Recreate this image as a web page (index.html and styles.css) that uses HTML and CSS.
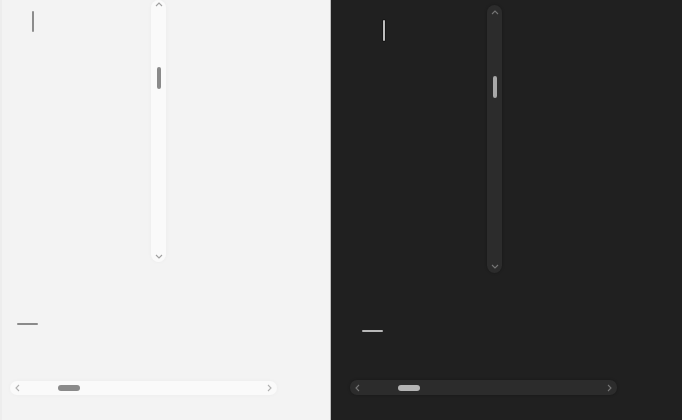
FILE: index.html
```html
<!DOCTYPE html>
<html>
<head>
<meta charset="utf-8">
<link rel="stylesheet" href="styles.css">
</head>
<body>
<div class="panel light">
  <div class="toprow">
    <div class="ind"></div>
    <div class="vbar">
      <svg class="chev" width="8" height="5" viewBox="0 0 8 5"><path d="M1 4 L4 1 L7 4" fill="none" stroke-width="1.1"/></svg>
      <div class="vspace1"></div>
      <div class="vthumb"></div>
      <div class="vspace2"></div>
      <svg class="chev" width="8" height="5" viewBox="0 0 8 5"><path d="M1 1 L4 4 L7 1" fill="none" stroke-width="1.1"/></svg>
    </div>
  </div>
  <div class="hline"></div>
  <div class="hbar">
    <svg class="chevh" width="5" height="8" viewBox="0 0 5 8"><path d="M4 1 L1 4 L4 7" fill="none" stroke-width="1.1"/></svg>
    <div class="hthumb"></div>
    <div class="hspace"></div>
    <svg class="chevh" width="5" height="8" viewBox="0 0 5 8"><path d="M1 1 L4 4 L1 7" fill="none" stroke-width="1.1"/></svg>
  </div>
</div>
<div class="divider"></div>
<div class="panel dark">
  <div class="toprow">
    <div class="ind"></div>
    <div class="vbar">
      <svg class="chev" width="8" height="5" viewBox="0 0 8 5"><path d="M1 4 L4 1 L7 4" fill="none" stroke-width="1.1"/></svg>
      <div class="vspace1"></div>
      <div class="vthumb"></div>
      <div class="vspace2"></div>
      <svg class="chev" width="8" height="5" viewBox="0 0 8 5"><path d="M1 1 L4 4 L7 1" fill="none" stroke-width="1.1"/></svg>
    </div>
  </div>
  <div class="hline"></div>
  <div class="hbar">
    <svg class="chevh" width="5" height="8" viewBox="0 0 5 8"><path d="M4 1 L1 4 L4 7" fill="none" stroke-width="1.1"/></svg>
    <div class="hthumb"></div>
    <div class="hspace"></div>
    <svg class="chevh" width="5" height="8" viewBox="0 0 5 8"><path d="M1 1 L4 4 L1 7" fill="none" stroke-width="1.1"/></svg>
  </div>
</div>
</body>
</html>
```
FILE: styles.css
```css
html, body {
  margin: 0;
  padding: 0;
  width: 682px;
  height: 420px;
  overflow: hidden;
  font-family: "Liberation Sans", Arial, sans-serif;
}
body {
  display: flex;
}
.panel {
  height: 420px;
  display: flex;
  flex-direction: column;
  align-items: flex-start;
}
.light {
  width: 330px;
  background: #f3f3f3;
  box-shadow: inset 2px 0 0 #ededed;
}
.divider {
  width: 1px;
  height: 420px;
  background: #bdbdbd;
}
.dark {
  width: 351px;
  background: #202020;
}
.toprow {
  display: flex;
  align-items: flex-start;
}
.ind {
  width: 2px;
  height: 21px;
  border-radius: 1px;
}
.vbar {
  width: 15px;
  display: flex;
  flex-direction: column;
  align-items: center;
  border-radius: 8px;
  box-sizing: border-box;
}
.vthumb {
  width: 4px;
  height: 22px;
  border-radius: 2px;
  margin-left: 1px;
}
.chev path, .chevh path { stroke: currentColor; }
.hline {
  width: 21px;
  height: 2px;
  border-radius: 1px;
}
.hbar {
  width: 267px;
  height: 14px;
  display: flex;
  align-items: center;
  border-radius: 7px;
  box-sizing: border-box;
  padding: 0 5px;
}
.hthumb {
  width: 22px;
  height: 6px;
  border-radius: 3px;
}
.hspace { flex: 1; }

/* light */
.light .ind { margin: 11px 0 0 32px; background: #8c8c8c; }
.light .vbar {
  margin-left: 117px;
  height: 262px;
  padding-top: 2px;
  background: #fafafa;
  box-shadow: 0 0 4px rgba(0,0,0,0.035);
  color: #a0a0a0;
}
.light .vspace1 { height: 60px; }
.light .vthumb { background: #8a8a8a; }
.light .vspace2 { flex: 1; }
.light .vbar .chev:last-child { margin-bottom: 3px; }
.light .hline { margin: 61px 0 0 17px; background: #8a8a8a; height: 1.5px; }
.light .hbar {
  margin: 56px 0 0 10px;
  background: #fafafa;
  box-shadow: 0 0 4px rgba(0,0,0,0.035);
  color: #b0b0b0;
}
.light .hthumb { margin-left: 38px; background: #8a8a8a; }

/* dark */
.dark .ind {
  margin: 20px 0 0 52px;
  background: #bdbdbd;
  box-shadow: 0 0 0 1px #151515;
}
.dark .vbar {
  margin: 5px 0 0 102px;
  height: 268px;
  padding-top: 5px;
  background: #2c2c2c;
  box-shadow: 0 0 3px rgba(0,0,0,0.3);
  color: #767676;
}
.dark .vspace1 { height: 61px; }
.dark .vthumb { background: #a8a8a8; }
.dark .vspace2 { flex: 1; }
.dark .vbar .chev:last-child { margin-bottom: 4px; }
.dark .hline { margin: 57px 0 0 31px; background: #b8b8b8; height: 2px; }
.dark .hbar {
  margin: 48px 0 0 19px;
  height: 15px;
  background: #2c2c2c;
  box-shadow: 0 0 3px rgba(0,0,0,0.3);
  color: #767676;
}
.dark .hthumb { margin-left: 38px; background: #b4b4b4; height: 6px; }
```
